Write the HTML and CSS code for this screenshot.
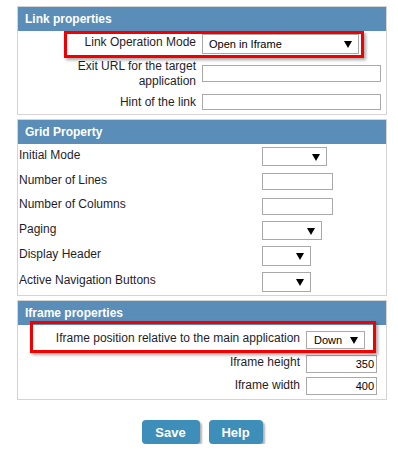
FILE: index.html
```html
<!DOCTYPE html>
<html>
<head>
<meta charset="utf-8">
<link rel="stylesheet" href="styles.css">
</head>
<body>
<div class="page">
  <section class="panel panel-link">
    <div class="panel-title">Link properties</div>
    <div class="row r1">
      <div class="label">Link Operation Mode</div>
      <div class="select sel-mode"><span>Open in Iframe</span><i class="arrow"></i></div>
    </div>
    <div class="row r2">
      <div class="label">Exit URL for the target<br>application</div>
      <input class="input wide" type="text">
    </div>
    <div class="row r3">
      <div class="label">Hint of the link</div>
      <input class="input wide" type="text">
    </div>
    <div class="highlight hl1"></div>
  </section>

  <section class="panel panel-grid">
    <div class="panel-title">Grid Property</div>
    <div class="row g1"><div class="label">Initial Mode</div><div class="select s65"><span></span><i class="arrow"></i></div></div>
    <div class="row g2"><div class="label">Number of Lines</div><input class="input small" type="text"></div>
    <div class="row g3"><div class="label">Number of Columns</div><input class="input small" type="text"></div>
    <div class="row g4"><div class="label">Paging</div><div class="select s60"><span></span><i class="arrow"></i></div></div>
    <div class="row g5"><div class="label">Display Header</div><div class="select s49"><span></span><i class="arrow"></i></div></div>
    <div class="row g6"><div class="label">Active Navigation Buttons</div><div class="select s49"><span></span><i class="arrow"></i></div></div>
  </section>

  <section class="panel panel-iframe">
    <div class="panel-title">Iframe properties</div>
    <div class="row f1">
      <div class="label">Iframe position relative to the main application</div>
      <div class="select sel-down"><span>Down</span><i class="arrow"></i></div>
    </div>
    <div class="row f2">
      <div class="label">Iframe height</div>
      <input class="input num" type="text" value="350">
    </div>
    <div class="row f3">
      <div class="label">Iframe width</div>
      <input class="input num" type="text" value="400">
    </div>
    <div class="highlight hl2"></div>
  </section>

  <div class="actions">
    <button class="btn save">Save</button>
    <button class="btn help">Help</button>
  </div>
</div>
</body>
</html>
```

FILE: styles.css
```css
* { box-sizing: border-box; }
body {
  margin: 0;
  background: #fff;
  font-family: "Liberation Sans", Arial, sans-serif;
  font-size: 12px;
  color: #1e1e2a;
}
.page {
  padding: 6px 0 0 17px;
  width: 387px;
}
.panel {
  position: relative;
  border: 1px solid #d4d4d4;
  width: 370px;
}
.panel + .panel { margin-top: 4px; }
.panel-title {
  background: #5a8db8;
  color: #fff;
  font-weight: bold;
  font-size: 12px;
  height: 24px;
  line-height: 24px;
  padding-left: 7px;
}
.row {
  display: flex;
  align-items: center;
}
.label { line-height: 14px; white-space: nowrap; }
.input {
  border: 1px solid #a9a9a9;
  height: 17px;
  padding: 0 2px;
  font-family: "Liberation Sans", Arial, sans-serif;
  font-size: 11px;
  color: #000;
  background: #fff;
  outline: none;
}
.select {
  position: relative;
  border: 1px solid #a9a9a9;
  height: 20px;
  background: #fff;
  font-size: 11px;
  color: #000;
  display: flex;
  align-items: center;
  padding-left: 6px;
}
.arrow {
  position: absolute;
  right: 6px;
  top: 50%;
  margin-top: -3px;
  width: 0;
  height: 0;
  border-left: 4px solid transparent;
  border-right: 4px solid transparent;
  border-top: 7px solid #000;
}

/* link panel */
.panel-link .label {
  width: 178px;
  text-align: right;
  margin-right: 6px;
}
.panel-link .r1 { height: 26px; }
.panel-link .r1 .label { align-self: flex-start; margin-top: 4px; }
.panel-link .r2 { height: 32px; }
.panel-link .r2 .label { line-height: 15px; padding-top: 1px; }
.panel-link .r3 { height: 25px; }
.panel-link .wide { width: 179px; }
.panel-link .r3 .wide { height: 16px; }
.sel-mode { width: 157px; }

/* grid panel */
.panel-grid .label {
  width: 244px;
  padding-left: 1px;
  padding-bottom: 4px;
}
.panel-grid .row { height: 25px; }
.panel-grid .g3 { height: 24px; }
.panel-grid .g5, .panel-grid .g6 { height: 26px; }
.panel-grid .small { width: 71px; }
.s65 { width: 65px; height: 19px; }
.s60 { width: 60px; height: 19px; }
.s49 { width: 49px; height: 20px; }

/* iframe panel */
.panel-iframe .label {
  width: 282px;
  text-align: right;
  margin-right: 6px;
  padding-bottom: 3px;
}
.panel-iframe .f1 { height: 27px; padding-top: 2px; }
.panel-iframe .f2 { height: 23px; }
.panel-iframe .f3 { height: 24px; padding-bottom: 2px; }
.sel-down { width: 59px; height: 18px; padding-left: 7px; }
.num { width: 71px; height: 18px; text-align: right; }

/* annotation overlays */
.highlight {
  position: absolute;
  border: 3px solid #f20000;
  box-shadow: 2px 2px 3px rgba(0,0,0,0.35);
  pointer-events: none;
}
.hl1 { left: 46px; top: 24px; width: 300px; height: 27px; }
.hl2 { left: 12px; top: 20px; width: 346px; height: 32px; }

/* buttons */
.actions {
  display: flex;
  justify-content: center;
  gap: 9px;
  width: 370px;
  margin-top: 20px;
}
.btn {
  background: #3d8eb8;
  color: #fff;
  border: none;
  border-radius: 4px;
  font-family: "Liberation Sans", Arial, sans-serif;
  font-weight: bold;
  font-size: 13px;
  height: 24px;
  padding: 0;
  box-shadow: 2px 2px 2px rgba(0,0,0,0.3);
}
.save { width: 58px; }
.help { width: 54px; }
```
